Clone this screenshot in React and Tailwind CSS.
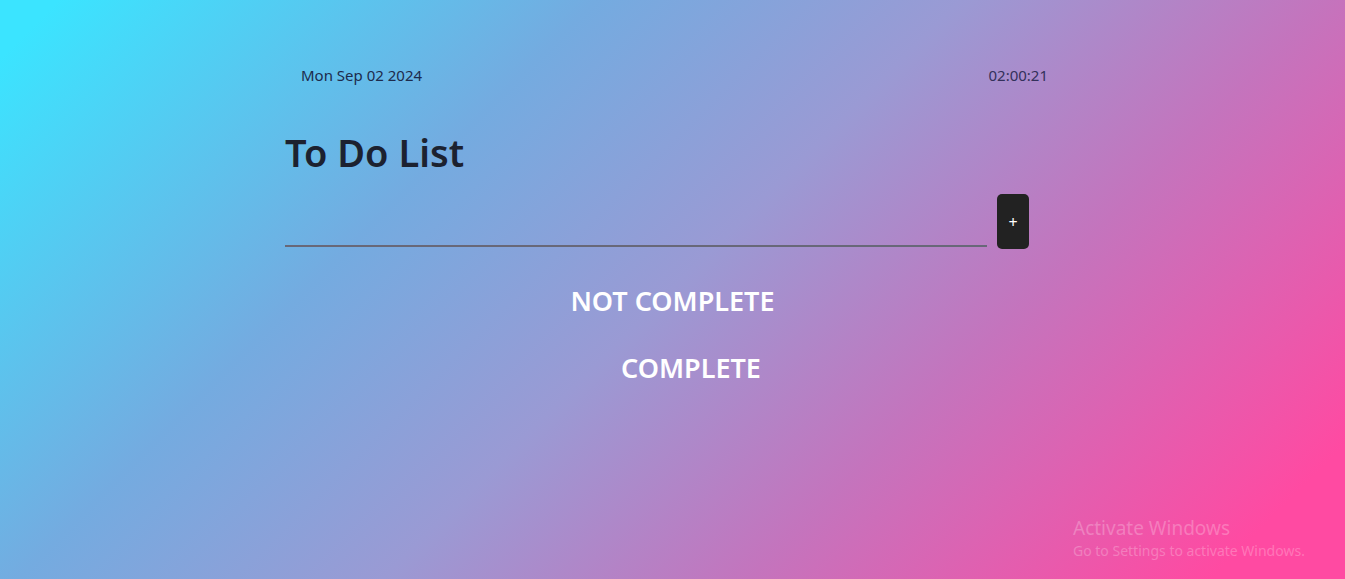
export default function App() {
  return (
    <div
      className="relative min-h-[579px] w-full overflow-hidden bg-[linear-gradient(135deg,#3be4ff_3%,#74abe0_31%,#9a9ad4_50%,#c474bd_69%,#ff4aa2_93%)]"
      style={{ fontFamily: '"Noto Sans", "Open Sans", sans-serif' }}
    >
      <div className="ml-[285px] w-[744px] pt-[64px]">
        {/* date + clock */}
        <div className="flex items-center justify-between pl-[16px] text-[15px] leading-[22px]">
          <span className="text-[#1d2b4c]">Mon Sep 02 2024</span>
          <span className="mr-[-19px] text-[#33305a]">02:00:21</span>
        </div>

        <h1 className="mt-[41px] text-[38px] font-semibold leading-[50px] text-[#1c2230]">To Do List</h1>

        <div className="mt-[17px] flex items-end gap-[10px]">
          <input
            type="text"
            className="h-[48px] w-[702px] border-b-2 border-[#686878] bg-transparent outline-none"
          />
          <button className="mb-[-2px] flex h-[55px] w-[32px] items-center justify-center rounded-[5px] bg-[#222222] text-[16px] text-white">
            +
          </button>
        </div>
      </div>

      <div className="mt-[36px] text-center text-[27px] font-semibold leading-[36px] text-white">NOT COMPLETE</div>
      <div className="mt-[31px] pl-[37px] text-center text-[27px] font-semibold leading-[36px] text-white">COMPLETE</div>

      {/* windows watermark */}
      <div className="absolute left-[1073px] top-[515px] text-[#ffffff]/25">
        <div className="text-[19px] leading-[26px]">Activate Windows</div>
        <div className="text-[14px] leading-[20px]">Go to Settings to activate Windows.</div>
      </div>
    </div>
  )
}
